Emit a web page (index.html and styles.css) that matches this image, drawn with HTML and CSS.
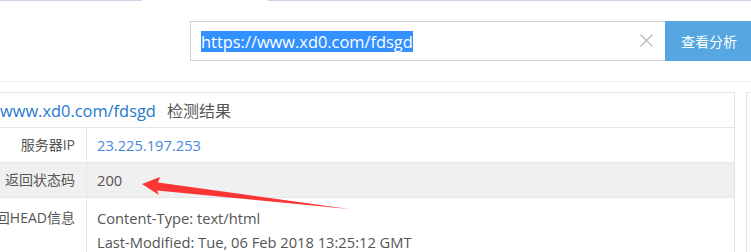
FILE: index.html
```html
<!DOCTYPE html>
<html lang="zh-CN">
<head>
<meta charset="utf-8">
<title>检测结果</title>
<link rel="stylesheet" href="styles.css">
</head>
<body>
<div class="tabs">
  <div class="tab-line tab-line-left"></div>
  <div class="tab-active"></div>
  <div class="tab-line tab-line-right"></div>
</div>
<div class="search-area">
  <div class="search">
    <div class="search-input">
      <span class="sel">https://www.xd0.com/fdsgd</span>
      <svg class="clear" width="13" height="13" viewBox="0 0 13 13"><path d="M0.5 0.5L12.5 12.5M12.5 0.5L0.5 12.5" stroke="#b4b4b4" stroke-width="1.1" fill="none"/></svg>
    </div>
    <button class="search-btn">查看分析</button>
  </div>
</div>
<div class="main">
  <div class="result">
    <div class="result-title"><span class="url">www.xd0.com/fdsgd</span><span class="title-text">检测结果</span></div>
    <div class="row">
      <div class="label">服务器IP</div>
      <div class="value ip">23.225.197.253</div>
    </div>
    <div class="row row-grey">
      <div class="label">返回状态码</div>
      <div class="value">200</div>
    </div>
    <div class="row row-multi">
      <div class="label">返回HEAD信息</div>
      <div class="value">
        <div>Content-Type: text/html</div>
        <div>Last-Modified: Tue, 06 Feb 2018 13:25:12 GMT</div>
      </div>
    </div>
  </div>
  <div class="side"></div>
</div>
<svg class="arrow" width="751" height="252" viewBox="0 0 751 252">
  <polygon points="142,184 160,177 158,182.5 349,209 157,190.5 159,195" fill="#fb3434"/>
</svg>
</body>
</html>
```
FILE: styles.css
```css
html, body {
  margin: 0;
  padding: 0;
  background: #fff;
  overflow: hidden;
  width: 751px;
  height: 252px;
}
body {
  font-family: "Open Sans", "Noto Sans CJK SC", sans-serif;
  color: #555;
  position: relative;
}
.tabs {
  display: flex;
  height: 1px;
}
.tab-line {
  background: #cdd2e4;
  height: 1px;
}
.tab-line-left { width: 142px; }
.tab-active { width: 126px; }
.tab-line-right { flex: 1; }

.search-area {
  padding: 20px 0 20px 190px;
  border-bottom: 1px solid #eeeeee;
}
.search {
  display: flex;
  height: 40px;
}
.search-input {
  box-sizing: border-box;
  width: 475px;
  flex-shrink: 0;
  height: 40px;
  border: 1px solid #c8cedb;
  border-right: none;
  display: flex;
  align-items: center;
  padding-left: 10px;
  position: relative;
}
.sel {
  background: #3390ff;
  color: #fff;
  font-size: 16.4px;
  line-height: 21px;
  white-space: nowrap;
}
.clear {
  position: absolute;
  left: 449px;
  top: 12px;
}
.search-btn {
  width: 90px;
  height: 40px;
  border: none;
  background: #55a6e1;
  color: #fff;
  font-family: "Noto Sans CJK SC", sans-serif;
  font-size: 14px;
  margin: 0;
  padding: 0 0 0 16px;
  text-align: left;
  flex-shrink: 0;
}

.main {
  display: flex;
  padding-top: 10px;
  margin-left: -40px;
}
.result {
  width: 773px;
  flex-shrink: 0;
  border: 1px solid #e2e2e2;
  border-bottom: none;
}
.side {
  flex-shrink: 0;
  width: 200px;
  height: 200px;
  margin-left: 11px;
  border: 1px solid #e2e2e2;
}
.result-title {
  height: 34px;
  display: flex;
  align-items: center;
  padding-left: 39px;
  border-bottom: 1px solid #e6e6e6;
  font-size: 16.4px;
  white-space: nowrap;
}
.url {
  color: #2479cf;
  margin-right: 11px;
}
.title-text {
  color: #555;
  font-size: 16px;
  font-family: "Noto Sans CJK SC", sans-serif;
}
.row {
  display: flex;
  height: 35px;
  box-sizing: border-box;
  border-bottom: 1px solid #e6e6e6;
  font-size: 14px;
}
.row-grey {
  background: #f0f0f0;
}
.row-multi {
  height: auto;
  border-bottom: none;
}
.label {
  width: 126px;
  box-sizing: border-box;
  flex-shrink: 0;
  text-align: right;
  padding-right: 11px;
  border-right: 1px solid #e6e6e6;
  line-height: 34px;
  white-space: nowrap;
  color: #555;
}
.row-multi .label {
  line-height: 24px;
  padding-top: 8px;
}
.value {
  padding-left: 10px;
  line-height: 34px;
  white-space: nowrap;
  color: #555;
  font-size: 14.7px;
}
.row-multi .value {
  line-height: 24px;
  padding-top: 8px;
}
.ip {
  color: #4488dd;
}
.arrow {
  position: absolute;
  left: 0;
  top: 0;
  pointer-events: none;
}
```
